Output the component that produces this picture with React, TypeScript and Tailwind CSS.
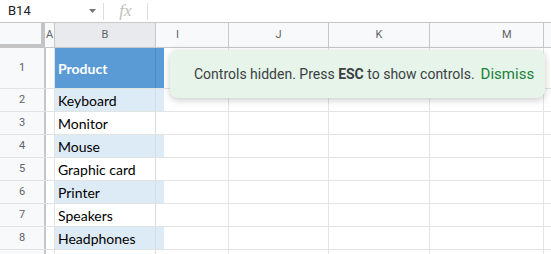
import React from "react";

const products = ["Keyboard", "Monitor", "Mouse", "Graphic card", "Printer", "Speakers", "Headphones"];

function BodyRow({ n, text, band, h }: { n: string; text: string; band: boolean; h: string }) {
  return (
    <div className={`flex ${h} border-b border-[#e2e3e3]`}>
      <div className="w-[46px] shrink-0 bg-[#f8f9fa] border-r-2 border-[#c4c7c5] flex items-center justify-center text-[11px] text-[#5f6368]" style={{ fontFamily: "Roboto, Arial, sans-serif" }}>
        {n}
      </div>
      <div className="w-[9px] shrink-0 border-r border-[#e2e3e3] bg-white" />
      <div className={`w-[101px] shrink-0 border-r border-[#d4dce4] flex items-center pl-[3px] text-[14px] text-black ${band ? "bg-[#ddebf7]" : "bg-white"}`} style={{ fontFamily: "Lato, 'Open Sans', sans-serif" }}>
        {text}
      </div>
      <div className="w-[73px] shrink-0 border-r border-[#e2e3e3] flex">
        <div className={`w-[8px] h-full ${band ? "bg-[#ddebf7]" : "bg-white"}`} />
      </div>
      <div className="w-[100px] shrink-0 border-r border-[#e2e3e3]" />
      <div className="w-[101px] shrink-0 border-r border-[#e2e3e3]" />
      <div className="w-[114px] shrink-0 border-r border-[#e2e3e3]" />
      <div className="flex-1" />
    </div>
  );
}

export default function App() {
  return (
    <div className="relative w-[551px] h-[254px] overflow-hidden bg-white" style={{ fontFamily: "Roboto, Arial, sans-serif" }}>
      {/* formula bar */}
      <div className="flex h-[23px] border-b border-[#c7c7c7] items-center">
        <div className="w-[103px] flex items-center justify-between pl-[8px] pr-[7px]">
          <span className="text-[13px] text-[#202124]">B14</span>
          <svg width="7" height="4" viewBox="0 0 7 4"><path d="M0 0h7L3.5 4z" fill="#777" /></svg>
        </div>
        <div className="w-px h-[17px] bg-[#dadce0]" />
        <div className="w-[43px] flex items-center justify-center">
          <span className="text-[17px] italic text-[#c0c0c0]" style={{ fontFamily: "'Liberation Serif', serif" }}>fx</span>
        </div>
        <div className="w-px h-[17px] bg-[#dadce0]" />
        <div className="flex-1" />
      </div>

      {/* column header */}
      <div className="flex h-[25px] text-[11px] text-[#5f6368]">
        <div className="w-[45px] shrink-0 flex">
          <div className="w-[41px] flex flex-col">
            <div className="flex-1 bg-[#f8f9fa]" />
            <div className="h-[4px] bg-[#c4c4c4]" />
          </div>
          <div className="w-[4px] bg-[#c4c4c4]" />
        </div>
        <div className="w-[10px] shrink-0 bg-[#f8f9fa] border-r border-b border-[#c7c7c7] flex items-center pl-[1px]">A</div>
        <div className="w-[101px] shrink-0 bg-[#e8eaed] border-r border-b border-[#c7c7c7] flex items-center justify-center">B</div>
        <div className="w-[73px] shrink-0 bg-[#f8f9fa] border-r border-b border-[#c7c7c7] flex items-center pl-[20px]">I</div>
        <div className="w-[100px] shrink-0 bg-[#f8f9fa] border-r border-b border-[#c7c7c7] flex items-center justify-center">J</div>
        <div className="w-[101px] shrink-0 bg-[#f8f9fa] border-r border-b border-[#c7c7c7] flex items-center justify-center">K</div>
        <div className="w-[114px] shrink-0 bg-[#f8f9fa] border-r border-b border-[#c7c7c7] flex items-center pl-[72px]">M</div>
        <div className="flex-1 bg-[#f8f9fa] border-b border-[#c7c7c7]" />
      </div>

      {/* row 1 */}
      <div className="flex h-[41px] border-b border-[#e2e3e3]">
        <div className="w-[46px] shrink-0 bg-[#f8f9fa] border-r-2 border-[#c4c7c5] flex items-center justify-center text-[11px] text-[#5f6368]">1</div>
        <div className="w-[9px] shrink-0 border-r border-[#e2e3e3] bg-white" />
        <div className="w-[101px] shrink-0 border-r border-[#4f8ac0] bg-[#5b9bd5] flex items-center pl-[3px] text-[14px] font-bold text-white" style={{ fontFamily: "Lato, 'Open Sans', sans-serif" }}>
          Product
        </div>
        <div className="w-[73px] shrink-0 border-r border-[#e2e3e3] flex">
          <div className="w-[8px] h-full bg-[#5b9bd5]" />
        </div>
        <div className="w-[100px] shrink-0 border-r border-[#e2e3e3]" />
        <div className="w-[101px] shrink-0 border-r border-[#e2e3e3]" />
        <div className="w-[114px] shrink-0 border-r border-[#e2e3e3]" />
        <div className="flex-1" />
      </div>

      {products.map((p, i) => (
        <BodyRow key={p} n={String(i + 2)} text={p} band={i % 2 === 0} h="h-[23px]" />
      ))}
      <BodyRow n="" text="" band={false} h="h-[23px]" />

      {/* toast */}
      <div className="absolute left-[170px] top-[50px] w-[375px] h-[48px] rounded-[8px] bg-[#e6f4ea] shadow-[0_2px_7px_rgba(60,64,67,0.28)] flex items-center pl-[24px] text-[14px] text-[#3c4043]">
        <span>
          Controls hidden. Press <b className="font-bold">ESC</b> to show controls.
        </span>
        <span className="ml-[6px] text-[15px] text-[#188038]">Dismiss</span>
      </div>
    </div>
  );
}
